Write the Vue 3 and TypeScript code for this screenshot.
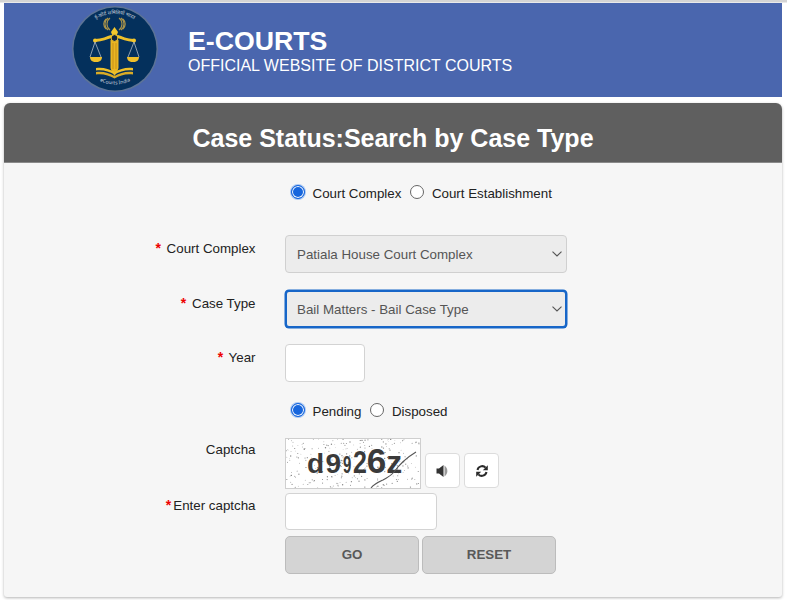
<script setup lang="ts">
import { ref } from 'vue'

const complex = ref('Patiala House Court Complex')
const caseType = ref('Bail Matters - Bail Case Type')

function rnd(seed: number): number {
  const x = Math.sin(seed * 127.1) * 43758.5453
  return x - Math.floor(x)
}
const specks = Array.from({ length: 300 }, (_, i) => ({
  x: rnd(i + 1) * 134,
  y: rnd(i + 500) * 50,
  r: 0.3 + rnd(i + 900) * 0.4,
}))
</script>

<template>
  <div class="page">
    <header class="banner">
      <svg class="logo" viewBox="0 0 86 86" width="86" height="86" aria-hidden="true">
        <circle cx="43" cy="43" r="43" fill="#5c7396" />
        <circle cx="43" cy="43" r="41.5" fill="#04305c" />
        <path d="M38 24c-4-3-4-9 0-12M36 24c-4-3-4-9 0-12M34 23c-3-3-3-7 0-10M47 24c4-3 4-9 0-12M49 24c4-3 4-9 0-12M51 23c3-3 3-7 0-10" fill="none" stroke="#a8924a" stroke-width="1.1" />
        <path d="M42.5 21l3.500 5-1.500 4h-4l-1.500-4z" fill="#f4c72c" />
        <path d="M23 33c7 0 12-3 16-4h7c4 1 9 4 16 4l-.5 3c-7-.5-12-3-16-4h-6c-4 1-9 3.500-16 4z" fill="#eec02a" />
        <path d="M38.5 34h8v28l-1 3-3 5-3-5-1-3z" fill="#eab622" />
        <path d="M41 37v26M44 37v26" stroke="#b98314" stroke-width=".7" />
        <circle cx="42.5" cy="32" r="3.4" fill="#10233d" stroke="#f4c72c" stroke-width="1" />
        <circle cx="23" cy="34.5" r="2" fill="#f4c72c" />
        <circle cx="62" cy="34.5" r="2" fill="#f4c72c" />
        <path d="M23 36l-5 15M23 36l6 15M62 36l-6 15M62 36l5 15" stroke="#c7ccd2" stroke-width=".7" fill="none" />
        <path d="M18 51h12c0 3-2 5-6 5s-6-2-6-5zM55 51h12c0 3-2 5-6 5s-6-2-6-5z" fill="#f0bf2b" />
        <path d="M24 62c7-1 13 1 18.500 4 5.500-3 11.500-5 18.500-4v2.500c-7-1-13 1-18.500 4-5.500-3-11.500-5-18.500-4z" fill="#eec02a" />
        <path d="M24 66c7-1 13 1 18.500 4 5.500-3 11.500-5 18.500-4v2.500c-7-1-13 1-18.500 4-5.500-3-11.500-5-18.500-4z" fill="#d9ab26" />
        <defs>
          <path id="arcTop" d="M8 43a35 35 0 0 1 70 0" />
          <path id="arcBottom" d="M18 68a35 35 0 0 0 50 0" />
        </defs>
        <text class="seal"><textPath href="#arcTop" startOffset="50%" text-anchor="middle">ई-कोर्ट समितियाँ भारत</textPath></text>
        <text class="seal"><textPath href="#arcBottom" startOffset="50%" text-anchor="middle">eCourts India</textPath></text>
      </svg>
      <div class="brand">
        <h1>E-COURTS</h1>
        <p>OFFICIAL WEBSITE OF DISTRICT COURTS</p>
      </div>
    </header>

    <section class="card">
      <h2 class="card-title">Case Status:Search by Case Type</h2>
      <form class="card-body" @submit.prevent>
        <div class="radios top-radios">
          <label class="radio"><span class="dot on"></span>Court Complex</label>
          <label class="radio"><span class="dot"></span>Court Establishment</label>
        </div>

        <div class="row sel-first">
          <label class="lbl"><b>*</b> Court Complex</label>
          <div class="select-wrap">
            <select v-model="complex" class="select">
              <option>Patiala House Court Complex</option>
            </select>
            <svg class="chev" viewBox="0 0 10 6" width="10" height="6"><path d="M.5.7 5 5l4.500-4.300" fill="none" stroke="#555" stroke-width="1.1" /></svg>
          </div>
        </div>

        <div class="row sel-second">
          <label class="lbl"><b>*</b> Case Type</label>
          <div class="select-wrap">
            <select v-model="caseType" class="select focus">
              <option>Bail Matters - Bail Case Type</option>
            </select>
            <svg class="chev" viewBox="0 0 10 6" width="10" height="6"><path d="M.5.7 5 5l4.500-4.300" fill="none" stroke="#555" stroke-width="1.1" /></svg>
          </div>
        </div>

        <div class="row year-row">
          <label class="lbl"><b>*</b> Year</label>
          <input class="input year" type="text" />
        </div>

        <div class="radios status-radios">
          <label class="radio"><span class="dot on"></span>Pending</label>
          <label class="radio"><span class="dot"></span>Disposed</label>
        </div>

        <div class="row captcha-row">
          <label class="lbl">Captcha</label>
          <div class="captcha">
            <svg class="specks" viewBox="0 0 134 50" width="134" height="50" aria-hidden="true">
              <circle v-for="(s, i) in specks" :key="i" :cx="s.x" :cy="s.y" :r="s.r" fill="#888" />
            </svg>
            <span class="cap-text"><span class="lead">d9</span><span class="small">9</span><span class="mid">2</span><span class="big">6</span><span class="zed">z</span></span>
            <svg class="specks" viewBox="0 0 134 50" width="134" height="50" aria-hidden="true">
              <path d="M85 49c3-4 8-6 12-8 5-3 8-4 11-8 5-7 12-14 22-20" fill="none" stroke="#555" stroke-width="1.1" />
            </svg>
          </div>
          <button class="icon-btn" type="button" aria-label="Play audio">
            <svg viewBox="0 0 14 14" width="14" height="14"><path d="M.5 4.500h2.500L7.500 1v12L3 9.500H.5z" fill="#333" /><path d="M8.500 1.500c3.800 3 3.800 8 0 11z" fill="#9a9a9a" /></svg>
          </button>
          <button class="icon-btn" type="button" aria-label="Refresh captcha">
            <svg viewBox="0 0 14 14" width="14" height="14"><path d="M2.500 6A4.700 4.700 0 0 1 10.600 3.700M11.500 8A4.700 4.700 0 0 1 3.400 10.300" fill="none" stroke="#2b2b2b" stroke-width="2" /><path d="M12.800 1.200V6.200H7.800zM1.200 12.800V7.800H6.200z" fill="#2b2b2b" /></svg>
          </button>
        </div>

        <div class="row enter-row">
          <label class="lbl"><b>*</b>Enter captcha</label>
          <input class="input cap-input" type="text" />
        </div>

        <div class="actions">
          <button class="btn" type="submit">GO</button>
          <button class="btn" type="reset">RESET</button>
        </div>
      </form>
    </section>
  </div>
</template>

<style>
html, body { background: #fff; }
</style>

<style scoped>
.page {
  width: 787px;
  height: 600px;
  overflow: hidden;
  box-sizing: border-box;
  padding: 3px 5px 0 4px;
  font-family: "Liberation Sans", Arial, sans-serif;
  color: #222;
  background: linear-gradient(#d4d4d4 0, #d4d4d4 2px, #fff 3px);
}
.banner {
  height: 94px;
  background: #4a66ae;
  display: flex;
  align-items: center;
  padding-left: 68px;
  gap: 30px;
  color: #fff;
}
.logo { flex: none; margin-top: -2px; }
.seal { font-family: "Noto Sans", "Liberation Sans", sans-serif; font-size: 5px; fill: #c9d3de; }
.brand h1 { margin: 0; font-size: 26.7px; line-height: 30px; font-weight: 700; }
.brand p { margin: 0; font-size: 16px; line-height: 19px; }

.card {
  margin-top: 6px;
  border-radius: 6px 6px 3px 3px;
  background: #f6f6f6;
  box-shadow: 0 1px 3px rgba(0, 0, 0, 0.3);
  height: 494px;
  overflow: hidden;
}
.card-title {
  margin: 0;
  height: 60px;
  background: #5f5f5f;
  color: #fff;
  font-size: 25px;
  line-height: 71px;
  text-align: center;
  font-weight: 700;
  border-bottom: 1px solid #8a8a8a;
  box-sizing: border-box;
}
.card-body { display: flex; flex-direction: column; }

.radios { display: flex; margin-left: 287px; gap: 9px; font-size: 13.33px; }
.radio { display: flex; align-items: center; gap: 7.5px; color: #222; line-height: 18px; }
.top-radios { margin-top: 22px; }
.status-radios { margin-top: 21px; }
.dot {
  width: 14px;
  height: 14px;
  box-sizing: border-box;
  border-radius: 50%;
  border: 1px solid #666;
  background: #fff;
  position: relative;
  top: -2px;
}
.dot.on {
  border: 1.5px solid #1766dd;
  background: #1766dd;
  box-shadow: inset 0 0 0 1px #fff, 0 0 0 1px rgba(120, 170, 240, 0.6);
}

.row { display: flex; align-items: flex-start; }
.lbl {
  width: 251.5px;
  flex: none;
  text-align: right;
  font-size: 13.33px;
  line-height: 18px;
  margin-right: 29.5px;
  padding-top: 4px;
  color: #222;
}
.lbl b { color: #e00; font-weight: 700; font-size: 14px; margin-right: 2px; }
.captcha-row .lbl, .enter-row .lbl { padding-top: 3px; }
.sel-first { margin-top: 32px; }
.sel-second { margin-top: 17px; }
.year-row { margin-top: 16px; }
.captcha-row { margin-top: 17px; }
.enter-row { margin-top: 4px; }

.select-wrap { position: relative; width: 282px; height: 38px; }
.select {
  appearance: none;
  width: 100%;
  height: 100%;
  box-sizing: border-box;
  padding: 0 11px;
  font: 13.33px "Liberation Sans", Arial, sans-serif;
  color: #555;
  background: #ececec;
  border: 1px solid #d0d0d0;
  border-radius: 4px;
  outline: none;
}
.select.focus { border: 2px solid #1766c8; padding: 0 10px; box-shadow: 0 0 0 .5px #1766c8; }
.chev { position: absolute; right: 5px; top: 16px; pointer-events: none; }

.input {
  box-sizing: border-box;
  height: 38px;
  background: #fff;
  border: 1px solid #d3d3d3;
  border-radius: 4px;
  outline: none;
  padding: 0 8px;
}
.year { width: 80px; }
.cap-input { width: 152px; height: 37px; }

.captcha {
  width: 136px;
  height: 51px;
  box-sizing: border-box;
  border: 1px solid #cfcfcf;
  background: #fff;
  position: relative;
  flex: none;
  padding: 5px 0 0 21px;
  overflow: hidden;
}
.specks { position: absolute; inset: 0; }
.cap-text {
  position: relative;
  display: flex;
  align-items: baseline;
  height: 34px;
  font-weight: 700;
  font-size: 28px;
  line-height: 34px;
  color: #3a3a3a;
  white-space: nowrap;
}
.cap-text .lead { letter-spacing: 1.5px; }
.cap-text .small {
  font-size: 23px;
  transform: scaleX(0.65);
  transform-origin: left;
  margin-right: -2.5px;
}
.cap-text .mid {
  font-size: 32px;
  transform: scaleX(0.78);
  transform-origin: left;
  margin-right: -4px;
}
.cap-text .big { font-size: 35px; }
.cap-text .zed { font-size: 32px; }

.icon-btn {
  width: 35px;
  height: 35px;
  margin: 15px 0 0 4px;
  box-sizing: border-box;
  border: 1px solid #dcdcdc;
  border-radius: 4px;
  background: #fff;
  padding: 0;
  display: flex;
  align-items: center;
  justify-content: center;
  flex: none;
}

.actions { display: flex; margin: 6px 0 0 281px; gap: 3px; }
.btn {
  width: 134px;
  height: 38px;
  box-sizing: border-box;
  background: #d4d4d4;
  border: 1px solid #bcbcbc;
  border-radius: 5px;
  color: #595959;
  font: 700 13.33px "Liberation Sans", Arial, sans-serif;
  padding: 0 0 2px;
}
</style>
